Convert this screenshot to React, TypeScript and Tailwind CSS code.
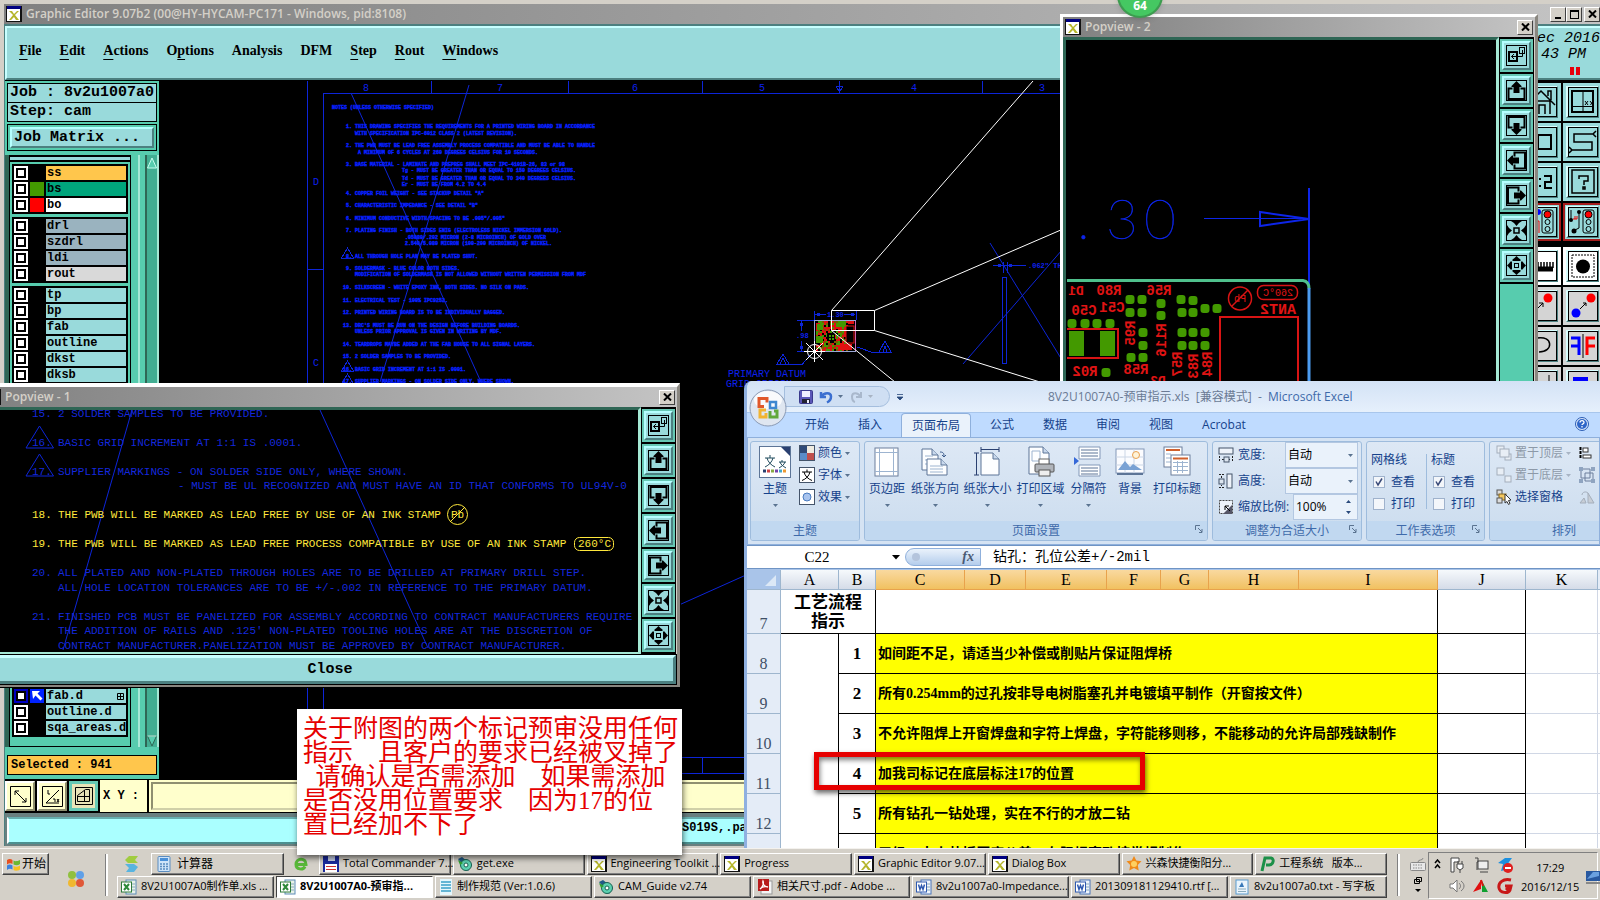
import React from "react";

const mono = "[font-family:'Liberation_Mono',monospace]";
const serif = "[font-family:'Liberation_Serif','Noto_Sans_CJK_SC',serif]";
const ui = "[font-family:'Open_Sans','Noto_Sans_CJK_SC',sans-serif]";

/* ---------- shared window parts ---------- */

function XLogo() {
  return (
    <svg width="16" height="16" viewBox="0 0 16 16" className="block shrink-0" aria-hidden="true">
      <rect x="0" y="0" width="16" height="16" fill="#111" />
      <rect x="1" y="0" width="14" height="3" fill="#000080" />
      <rect x="1" y="3" width="13" height="12" fill="#fff" />
      <path d="M3 5h3l2 3 3-3h2l-4 4 4 5h-3l-2-3-3 3H3l4-5z" fill="#b5b52a" />
    </svg>
  );
}

const winButton =
  "flex h-[15px] w-4 shrink-0 items-center justify-center border border-t-white border-l-white border-r-[#404040] border-b-[#404040] bg-[#d4d0c8] text-black";

function CloseButton() {
  return (
    <button className={winButton} aria-label="Close window">
      <svg width="9" height="8" viewBox="0 0 9 8">
        <path d="M1 .5l7 7M8 .5l-7 7" stroke="#000" strokeWidth="2" />
      </svg>
    </button>
  );
}

function TitleBar({ title, children }: { title: string; children: React.ReactNode }) {
  return (
    <div className="flex h-5 shrink-0 items-center gap-1 bg-gradient-to-r from-[#808080] to-[#c4c4c4] px-0.5">
      <XLogo />
      <span className={`${ui} flex-1 whitespace-nowrap text-[12px] leading-5 font-semibold text-[#d4d0c8]`}>{title}</span>
      {children}
    </div>
  );
}

/* ---------- popview tool column ---------- */

const tray = (
  <>
    <path d="M6.500 8.500H2.500V19H18.500V8.500H14.500" fill="none" stroke="#000" strokeWidth="2" />
    <path d="M10.500 1l3 3 2 2v1h-2v6h-6V7h-2V6l2-2z" fill="#000" />
  </>
);

const popIcons: { label: string; art: React.ReactNode }[] = [
  {
    label: "Detach",
    art: (
      <g fill="none" stroke="#000">
        <rect x="3" y="7" width="8" height="9" strokeWidth="2" />
        <rect x="13.500" y="2.500" width="5" height="6" />
        <path d="M16.500 5v6.500H5.500M8 9l-2.500 2.500L8 14" />
      </g>
    ),
  },
  { label: "Pan up", art: tray },
  { label: "Pan down", art: <g transform="rotate(180 10.5 10.5)">{tray}</g> },
  { label: "Pan left", art: <g transform="rotate(-90 10.5 10.5)">{tray}</g> },
  { label: "Pan right", art: <g transform="rotate(90 10.5 10.5)">{tray}</g> },
  {
    label: "Zoom in",
    art: (
      <g>
        <rect x="8" y="8" width="5" height="5" fill="none" stroke="#000" strokeWidth="1.500" />
        {[0, 90, 180, 270].map((a) => (
          <path key={a} d="M5 1h11l-3 2-2.500 3L8 3z" transform={`rotate(${a} 10.5 10.5)`} />
        ))}
      </g>
    ),
  },
  {
    label: "Zoom out",
    art: (
      <g>
        <rect x="8.500" y="8.500" width="4" height="4" fill="none" stroke="#000" />
        {[0, 90, 180, 270].map((a) => (
          <path key={a} d="M10.500 1l2 2 2 1.500V6h-8V4.500l2-1.500z" transform={`rotate(${a} 10.5 10.5)`} />
        ))}
      </g>
    ),
  },
];

function PopTools() {
  return (
    <div className="mr-px flex w-[35px] shrink-0 flex-col gap-0.5 bg-black px-px pt-0.5">
      {popIcons.map((i) => (
        <button
          key={i.label}
          aria-label={i.label}
          className="h-[33px] w-[33px] shrink-0 border-2 border-[#66c8b4] bg-[#99dadb]"
        >
          <span className="flex h-full w-full items-center justify-center border-2 border-t-[#b5ffff] border-r-[#4c8080] border-b-[#4c8080] border-l-[#b5ffff]">
            <svg width="21" height="21" viewBox="0 0 21 21">
              <rect x=".5" y=".5" width="20" height="20" fill="none" stroke="#000" />
              {i.art}
            </svg>
          </span>
        </button>
      ))}
      <div className="min-h-0 flex-1 bg-[#57ccae]" />
    </div>
  );
}

/* ---------- layer list ---------- */

type Layer = { name: string; bg: string; swatch?: string };
const layerGroups: Layer[][] = [
  [
    { name: "ss", bg: "bg-[#ffc64c]" },
    { name: "bs", bg: "bg-[#00a57c]", swatch: "bg-[#439900]" },
    { name: "bo", bg: "bg-white", swatch: "bg-[#ff0000]" },
  ],
  [
    { name: "drl", bg: "bg-[#9ab3bf]" },
    { name: "szdrl", bg: "bg-[#9ab3bf]" },
    { name: "ldi", bg: "bg-[#9ab3bf]" },
    { name: "rout", bg: "bg-[#d9d9d9]" },
  ],
  ["tp", "bp", "fab", "outline", "dkst", "dksb"].map((name) => ({ name, bg: "bg-[#99dadb]" })),
];

function LayerRow({ layer, selected }: { layer: Layer; selected?: boolean }) {
  return (
    <div className="flex h-[14px] items-stretch gap-0.5">
      <button
        aria-label={`Toggle ${layer.name}`}
        className={`flex w-[14px] shrink-0 items-center justify-center ${selected ? "bg-[#0000c0]" : "bg-white"}`}
      >
        <span className="h-[10px] w-[10px] border-2 border-black bg-white" />
      </button>
      <span className={`flex w-[14px] shrink-0 items-center justify-center ${selected ? "bg-[#0022ff]" : layer.swatch ?? "bg-black"}`}>
        {selected && (
          <svg width="12" height="12" viewBox="0 0 12 12">
            <path d="M1 1h8L6.500 3.500l5 5-2 2-5-5L2 9z" fill="#fff" />
          </svg>
        )}
      </span>
      <span className={`flex min-w-0 flex-1 items-center justify-between pl-px text-[12px] leading-[14px] font-bold ${layer.bg}`}>
        {layer.name}
        {selected && (
          <svg width="7" height="7" viewBox="0 0 7 7" className="mr-0.5">
            <path d="M.5 .5h6v6h-6zM3.500 .5v6M.5 3.500h6" fill="none" stroke="#000" />
          </svg>
        )}
      </span>
    </div>
  );
}

function LayerPanel() {
  return (
    <aside className={`${mono} flex w-[154px] shrink-0 flex-col bg-[#57ccae] text-black`}>
      <div className="mx-0.5 mt-0.5 flex flex-col border border-black bg-[#99dadb] text-[15px] leading-[18px] font-bold">
        <div className="border-b border-black pl-0.5 whitespace-nowrap">Job : 8v2u1007a0</div>
        <div className="pl-0.5">Step: cam</div>
      </div>
      <div className="mx-0.5 mt-0.5 border border-black p-0.5">
        <button className="block h-[21px] w-full border-2 border-t-[#b5ffff] border-r-[#4c8080] border-b-[#4c8080] border-l-[#b5ffff] bg-[#99dadb] px-0.5 text-left text-[15px] leading-[17px] font-bold">
          Job Matrix ...
        </button>
      </div>
      <div className="mt-1 flex min-h-0 flex-1 border-l-4 border-[#2f6655]">
        <div className="flex w-[122px] flex-col border-x border-t-2 border-b border-black">
          <div className="h-[3px] shrink-0 bg-[#99dadb]" />
          <div className="mb-0.5 h-0.5 shrink-0 bg-black" />
          {layerGroups.map((g) => (
            <div key={g[0].name} className="mx-0.5 mb-[3px] flex flex-col gap-0.5 bg-black p-0.5">
              {g.map((l) => (
                <LayerRow key={l.name} layer={l} />
              ))}
            </div>
          ))}
          <div className="min-h-0 flex-1" />
          <div className="mx-0.5 mb-[9px] flex flex-col gap-0.5 bg-black p-0.5">
            <LayerRow layer={{ name: "fab.d", bg: "bg-[#99dadb]" }} selected />
            <LayerRow layer={{ name: "outline.d", bg: "bg-[#99dadb]" }} />
            <LayerRow layer={{ name: "sqa_areas.d", bg: "bg-[#99dadb]" }} />
          </div>
        </div>
        <div className="ml-1 w-[5px] border-r-2 border-[#a5e8d5]" />
        <div className="ml-[5px] flex w-[14px] flex-col border-x-2 border-l-[#2f6655] border-r-[#a5e8d5] bg-[#42ad92]">
          <svg width="10" height="12" viewBox="0 0 10 12" className="mt-0.5">
            <path d="M5 1L9.500 11H.5z" fill="#57ccae" stroke="#c8fff0" />
          </svg>
          <span className="flex-1" />
          <svg width="10" height="12" viewBox="0 0 10 12">
            <path d="M5 11L.5 1h9z" fill="#57ccae" stroke="#2f6655" />
            <path d="M.5 1h9" stroke="#c8fff0" />
          </svg>
        </div>
      </div>
      <div className="mx-0.5 mt-2 mb-1 h-5 border border-black bg-[#ffc64c] px-[3px] text-[12px] leading-[18px] font-bold">
        Selected : 941
      </div>
    </aside>
  );
}

/* ---------- main board canvas ---------- */

const notes: [number, number, string, string][] = [
  [355, 128, "1.", "THIS DRAWING SPECIFIES THE REQUIREMENTS FOR A PRINTED WIRING BOARD IN ACCORDANCE"],
  [355, 135, "", "WITH SPECIFICATION IPC-6012 CLASS 2 (LATEST REVISION)."],
  [355, 147, "2.", "THE PWB MUST BE LEAD FREE ASSEMBLY PROCESS COMPATIBLE AND MUST BE ABLE TO HANDLE"],
  [358, 154, "", "A MINIMUM OF 6 CYCLES AT 260 DEGREES CELSIUS FOR 10 SECONDS."],
  [355, 166, "3.", "BASE MATERIAL - LAMINATE AND PREPREG SHALL MEET IPC-4101B-26, 83 or 98"],
  [402, 172, "", "Tg - MUST BE GREATER THAN OR EQUAL TO 150 DEGREES CELSIUS."],
  [402, 180, "", "Td - MUST BE GREATER THAN OR EQUAL TO 340 DEGREES CELSIUS."],
  [402, 186, "", "Er - MUST BE FROM 4.2 TO 4.4"],
  [355, 195, "4.", 'COPPER FOIL WEIGHT - SEE STACKUP DETAIL "A"'],
  [355, 207, "5.", 'CHARACTERISTIC IMPEDANCE - SEE DETAIL "B"'],
  [355, 220, "6.", 'MINIMUM CONDUCTIVE WIDTH/SPACING TO BE .005"/.005"'],
  [355, 232, "7.", "PLATING FINISH - BOTH SIDES ENIG (ELECTROLESS NICKEL IMMERSION GOLD)."],
  [405, 239, "", ".05080/.202 MICRON (2-8 MICROINCH) OF GOLD OVER"],
  [405, 245, "", "2.540/5.080 MICRON (100-200 MICROINCH) OF NICKEL."],
  [355, 258, "8.", "ALL THROUGH HOLE PLAN MAY BE PLATED SHUT."],
  [355, 270, "9.", "SOLDERMASK - BLUE COLOR BOTH SIDES."],
  [355, 276, "", "MODIFICATION OF SOLDERMASK IS NOT ALLOWED WITHOUT WRITTEN PERMISSION FROM MDF"],
  [355, 289, "10.", "SILKSCREEN - WHITE EPOXY INK, BOTH SIDES.  NO SILK ON PADS."],
  [355, 302, "11.", "ELECTRICAL TEST - 100% IPC9252."],
  [355, 314, "12.", "PRINTED WIRING BOARD IS TO BE INDIVIDUALLY BAGGED."],
  [355, 327, "13.", "DRC'S MUST BE RUN ON THE DESIGN BEFORE BUILDING BOARDS."],
  [355, 333, "", "UNLESS PRIOR APPROVAL IS GIVEN IN WRITING BY MDF."],
  [355, 346, "14.", "TEARDROPS MAYBE ADDED AT THE FAB HOUSE TO ALL SIGNAL LAYERS."],
  [355, 358, "15.", "2 SOLDER SAMPLES TO BE PROVIDED."],
  [355, 371, "16.", "BASIC GRID INCREMENT AT 1:1 IS .0001."],
  [355, 383, "17.", "SUPPLIER MARKINGS - ON SOLDER SIDE ONLY, WHERE SHOWN."],
];

const speckles = (() => {
  const out: { x: number; y: number; c: string }[] = [];
  let s = 7;
  const palette = ["#e01010", "#e01010", "#439900", "#439900", "#000", "#7a5a00"];
  for (let y = 321; y < 351; y += 2)
    for (let x = 816; x < 848; x += 2) {
      s = (s * 1103515245 + 12345) % 2147483648;
      out.push({ x, y, c: palette[Math.floor(s / 65536) % palette.length] });
    }
  return out;
})();

function BoardCanvas() {
  return (
    <svg width="1441" height="697" viewBox="159 81 1441 697" className="block shrink-0">
      <rect x="159" y="81" width="1441" height="697" fill="#000" />
      <g stroke="#0d25d8" fill="none" shapeRendering="crispEdges">
        <path d="M307.500 81V778M323.500 778V93.500H1062M431.500 81V93M568.500 81V93M702.500 81V93M839.500 81V93M982.500 81V93M307 269.500H323M660 757.500H760M660 773.500H760M702.500 757V773" />
        <path d="M836 86l3.500 6 3.500-6zM341.500 258l6-10 6 10zM341.500 371l6-10 6 10zM341.500 384l6-10 6 10z" />
        <path d="M814.500 311V320M856.500 311V320M815 314.500H826M844 314.500H855M797 320.500H814M797 351.500H810M801.500 321V331M801.500 341V351" />
        <path d="M776 364.500h26l8-9M777 364l6-10 6 10zM780 364l3-6 3 6M857 347l14 5h19M879 352l6-11 6 11zM883 352l2-6 2 6" />
        <path d="M993 265.500H1010M1008 265.500H1026M1003.500 262V273M1007.500 262V273M1002.500 277.500H1006.500V363.500H1002.500z" />
      </g>
      <g fill="#0d25d8">
        <path d="M800 323h3v3h-3zM800 346h3v3h-3zM817 313h3v3h-3zM851 313h3v3h-3zM998 264h3v3h-3zM1009 264h3v3h-3z" />
      </g>
      <g stroke="#0d25d8" fill="none">
        <path d="M351 93L481 382M469 85L380 382M990 243L1062 360M963 364L1062 250M679 605L746 575" />
      </g>
      <g fill="#0d20f0" className={mono}>
        <g fontSize="10" textAnchor="middle">
          <text x="366" y="91">8</text>
          <text x="500" y="91">7</text>
          <text x="635" y="91">6</text>
          <text x="762" y="91">5</text>
          <text x="914" y="91">4</text>
          <text x="1042" y="91">3</text>
          <text x="316" y="185">D</text>
          <text x="316" y="366">C</text>
        </g>
        <g fontSize="5" fontWeight="700" fill="#0820ff" stroke="#0820ff" strokeWidth=".4" className="whitespace-pre">
          <text x="332" y="109">NOTES (UNLESS OTHERWISE SPECIFIED)</text>
          {notes.map(([x, y, n, t]) => (
            <React.Fragment key={y}>
              {n && (
                <text x="352" y={y} textAnchor="end">
                  {n}
                </text>
              )}
              <text x={x} y={y}>
                {t}
              </text>
            </React.Fragment>
          ))}
        </g>
        <text x="728" y="377" fontSize="10">PRIMARY DATUM</text>
        <text x="726" y="387" fontSize="10">GRID ORIGIN</text>
        <text x="827" y="317" fontSize="7" fontWeight="700">1.30</text>
        <text x="796" y="338" fontSize="7" fontWeight="700">.98</text>
        <text x="1028" y="268" fontSize="7" fontWeight="700">.062" THK</text>
      </g>
      {speckles.map((p) => (
        <rect key={`${p.x}-${p.y}`} x={p.x} y={p.y} width="2" height="2" fill={p.c} />
      ))}
      <g fill="#439900">
        <rect x="817" y="324" width="6" height="6" />
        <rect x="838" y="321" width="8" height="6" />
        <rect x="816" y="336" width="7" height="7" />
        <rect x="827" y="333" width="8" height="8" fill="#000" />
        <rect x="829" y="335" width="2" height="2" />
        <rect x="832" y="335" width="2" height="2" />
        <rect x="829" y="338" width="2" height="2" />
        <rect x="832" y="338" width="2" height="2" />
        <rect x="848" y="321" width="6" height="3" fill="#e01010" />
        <rect x="840" y="344" width="12" height="6" fill="#e01010" />
        <rect x="846" y="326" width="8" height="17" fill="#000" stroke="#e01010" />
      </g>
      <rect x="814.500" y="320.500" width="41" height="31" fill="none" stroke="#9aa8d8" />
      <path d="M855.500 321V351" stroke="#d060b0" />
      <g stroke="#fff" fill="none">
        <path d="M831.500 310.500H874.500V330.500H831.500zM831.500 310.500L1033 81M874.500 310.500L1062 229.500M874.500 330.500L1040 382M831.500 330.500L895 382" />
        <circle cx="814.500" cy="351.500" r="7" />
        <path d="M814.500 341V362M804 351.500H825M806 343L823 360M806 360L823 343" />
      </g>
    </svg>
  );
}

/* ---------- main window toolbar ---------- */

const thin = { fill: "none", stroke: "#000" } as const;
function Lamp() {
  return (
    <g stroke="#000">
      <rect x="15" y="3" width="11" height="23" rx="2" fill="none" />
      <circle cx="20.500" cy="7.500" r="3.500" fill="#f00" />
      <circle cx="20.500" cy="15" r="2.500" fill="none" />
      <circle cx="20.500" cy="22" r="2.500" fill="none" />
    </g>
  );
}
const toolButtons: { label: string; bg: string; frame: string; art: React.ReactNode }[] = [
  { label: "Home view", bg: "bg-[#99dadb]", frame: "border-[#99dadb]", art: <path d="M7 27V14H23V27M1 17L14 4 28 18M12 27V18h6v9M21 9V4h3v9" {...thin} strokeWidth="1.500" /> },
  { label: "Window XY", bg: "bg-[#99dadb]", frame: "border-[#99dadb]", art: <g {...thin}><rect x="4" y="4" width="21" height="21" strokeWidth="2" /><path d="M15 4V25M4 19.500H25M17 14l3 4M20 14l-3 4M22 14l1.500 2M25 14l-2.500 4" /></g> },
  { label: "Area", bg: "bg-[#99dadb]", frame: "border-[#99dadb]", art: <rect x="11" y="8" width="13" height="14" {...thin} strokeWidth="2" /> },
  { label: "Serpentine", bg: "bg-[#99dadb]", frame: "border-[#99dadb]", art: <path d="M26 7H6v8H24v8H3M28 4l-3 3 3 3M1 20l3 3-3 3" {...thin} strokeWidth="1.500" /> },
  { label: "Scale 1:2", bg: "bg-[#99dadb]", frame: "border-[#99dadb]", art: <g><path d="M12 11h2v2h-2zM12 18h2v2h-2z" /><path d="M17 9h7v6h-6v6h7" {...thin} strokeWidth="2" /></g> },
  { label: "Help", bg: "bg-[#99dadb]", frame: "border-[#99dadb]", art: <g><rect x="4" y="3" width="22" height="23" {...thin} strokeWidth="1.500" /><path d="M11 12V9h9v5h-4v4M15 20h2v2h-2z" {...thin} strokeWidth="1.500" /></g> },
  { label: "Traffic left", bg: "bg-[#99dadb]", frame: "border-[#a51c1c]", art: <g><Lamp /><circle cx="11" cy="5" r="3" fill="#00f" /><path d="M4 14h8v12" fill="none" stroke="#e00" /></g> },
  { label: "Traffic right", bg: "bg-[#99dadb]", frame: "border-[#a51c1c]", art: <g><Lamp /><path d="M3 3v10M11 5v16l-6 3" {...thin} /><circle cx="3" cy="13" r="2" /><circle cx="11" cy="5" r="2" /><circle cx="6" cy="24" r="2.500" /><path d="M5 12h4v-3M7 12V9" stroke="#e00" fill="none" /></g> },
  { label: "Ruler", bg: "bg-white", frame: "border-white", art: <g><path d="M0 18h26" stroke="#000" strokeWidth="5" /><path d="M2 11v6M5 11v6M8 11v6M11 11v6M14 11v6M17 11v6M20 11v6M23 11v6M26 11v6" stroke="#000" strokeWidth="1.500" /></g> },
  { label: "Pad", bg: "bg-white", frame: "border-white", art: <g><rect x="4" y="4" width="22" height="22" {...thin} strokeDasharray="2 1" /><circle cx="15" cy="15.500" r="7" /></g> },
  { label: "Move point", bg: "bg-[#d4d4d4]", frame: "border-[#d4d4d4]", art: <g><circle cx="21" cy="7" r="4.500" fill="#f00" /><path d="M8 20l8-8M16 16v-4h-4" {...thin} /></g> },
  { label: "Copy point", bg: "bg-[#d4d4d4]", frame: "border-[#d4d4d4]", art: <g><circle cx="23" cy="7" r="4.500" fill="#f00" /><circle cx="8" cy="22" r="4.500" fill="#00f" /><path d="M12 18l6-6M18 15v-3h-3" {...thin} /></g> },
  { label: "Rotate", bg: "bg-[#d4d4d4]", frame: "border-[#d4d4d4]", art: <path d="M10 7c16-3 17 14 2 14" {...thin} strokeWidth="1.500" /> },
  { label: "Mirror", bg: "bg-[#d4d4d4]", frame: "border-[#d4d4d4]", art: <g fill="none" strokeWidth="3"><path d="M3 7h8v17M3 15h8" stroke="#00f" /><path d="M15 3v24" stroke="#000" strokeWidth="1" /><path d="M27 7h-8v17M27 15h-8" stroke="#f00" /></g> },
  { label: "Stretch", bg: "bg-[#d4d4d4]", frame: "border-[#d4d4d4]", art: <path d="M22 4v20" {...thin} /> },
  { label: "Attributes", bg: "bg-[#d4d4d4]", frame: "border-[#d4d4d4]", art: <path d="M5 6h15v12h-4v-6h-7v6H5z" fill="#00f" /> },
];

function ToolGrid() {
  return (
    <div className="-mr-0.5 grid w-[80px] shrink-0 grid-cols-2 content-start gap-0.5 bg-black pt-0.5">
      {toolButtons.map((b, i) => (
        <button key={b.label} aria-label={b.label} className={`h-[38px] border-2 p-px ${b.bg} ${b.frame} ${i === 8 || i === 9 ? "mt-1" : ""}`}>
          <span className="flex h-full w-full items-center justify-center border-2 border-t-[#d8ffff] border-r-[#4c8080] border-b-[#4c8080] border-l-[#d8ffff]">
            <svg width="30" height="30" viewBox="0 0 30 30" className="shrink-0">
              <rect x=".5" y=".5" width="29" height="29" {...thin} />
              {b.art}
            </svg>
          </span>
        </button>
      ))}
    </div>
  );
}

/* ---------- main window ---------- */

const menus: [string, string, string][] = [
  ["", "F", "ile"],
  ["", "E", "dit"],
  ["", "A", "ctions"],
  ["O", "p", "tions"],
  ["Analysis", "", ""],
  ["DFM", "", ""],
  ["", "S", "tep"],
  ["", "R", "out"],
  ["", "W", "indows"],
];

const creamButton =
  "flex h-[30px] w-[30px] shrink-0 items-center justify-center border-2 border-t-white border-l-white border-r-[#8f8f70] border-b-[#8f8f70] bg-[#ffffcc]";

function GraphicEditor() {
  return (
    <section className="absolute inset-0 flex flex-col overflow-hidden border-t-4 border-b-2 border-l-4 border-[#d4d0c8]">
      <TitleBar title="Graphic Editor 9.07b2 (00@HY-HYCAM-PC171 - Windows, pid:8108)">
        <div className="-mr-0.5 flex items-center">
          <button className={winButton} aria-label="Minimize">
            <span className="mt-2 h-0.5 w-[6px] bg-black" />
          </button>
          <button className={winButton} aria-label="Maximize">
            <span className="h-[9px] w-[9px] border border-t-2 border-black" />
          </button>
          <span className="w-0.5" />
          <CloseButton />
        </div>
      </TitleBar>
      <div className="flex min-h-0 flex-1 flex-col border-t-2 border-l border-[#4c8080]">
        <header className="flex h-[54px] shrink-0 items-center border-2 border-t-[#c8ffff] border-r-0 border-b-[#4c8080] border-l-[#c8ffff] bg-[#99dadb]">
          <nav className={`${serif} flex flex-1 gap-[18px] pb-1 pl-3 text-[14px] leading-5 font-bold text-black`}>
            {menus.map(([a, u, b]) => (
              <button key={a + u + b}>
                {a}
                {u && <span className="underline underline-offset-4">{u}</span>}
                {b}
              </button>
            ))}
          </nav>
          <div className={`${mono} flex w-[63px] flex-col items-start text-[15px] leading-4 italic`}>
            <span>ec 2016</span>
            <span className="pl-1">43 PM</span>
            <span className="mt-1 flex gap-0.5 pl-[33px]">
              <span className="h-2 w-1 bg-red-600" />
              <span className="h-2 w-1 bg-red-600" />
            </span>
          </div>
        </header>
        <div className="flex min-h-0 flex-1 border-t border-black">
          <LayerPanel />
          <div className="min-w-0 flex-1 overflow-hidden bg-black">
            <BoardCanvas />
          </div>
          <ToolGrid />
        </div>
        <div className="flex h-[34px] shrink-0 items-center gap-0.5 bg-black">
          <button className={creamButton} aria-label="Measure">
            <svg width="21" height="21" viewBox="0 0 21 21">
              <path d="M.5 .5h20v20H.5zM5 5l11 11M5 9V5h4M16 12v4h-4" {...thin} />
            </svg>
          </button>
          <button className={creamButton} aria-label="Angle snap">
            <svg width="21" height="21" viewBox="0 0 21 21">
              <path d="M.5 .5h20v20H.5zM4 17L17 4M4 17H17M6 4v4h2M11 13h2v3M15 13l2 3M17 13l-2 3" {...thin} />
            </svg>
          </button>
          <button className="flex h-[30px] w-[29px] shrink-0 items-center justify-center border-[3px] border-[#66c8b4] bg-[#e8e4b8]" aria-label="Grid">
            <svg width="18" height="18" viewBox="0 0 18 18">
              <path d="M.5 .5h17v17H.5zM10.500 2.500h4v12h-12v-6zM9.500 3v12M3 9.500h12" {...thin} />
            </svg>
          </button>
          <label htmlFor="xy" className={`${mono} flex h-[32px] w-[47px] shrink-0 items-center bg-[#ffffcc] pl-[3px] text-[12px] font-bold whitespace-pre`}>
            X Y :
          </label>
          <div className="h-[32px] flex-1 bg-[#ffffcc] p-0.5">
            <input id="xy" className="h-full w-full border-2 border-[#8f8f70] border-r-[#d0d0a8] border-b-[#d0d0a8] bg-[#ffffcc]" />
          </div>
        </div>
        <div className="h-[33px] shrink-0 bg-[#6a8080] pt-1 pl-0.5">
          <div className={`${mono} h-[27px] border-2 border-t-[#66b0b0] border-r-0 border-b-[#4c9090] border-l-white bg-[#aaffff] pl-[673px] text-[12px] leading-[19px] font-bold`}>
            S019S,.pa
          </div>
        </div>
      </div>
    </section>
  );
}

/* ---------- popview windows ---------- */

const popLines: [number, number, string, string, boolean?][] = [
  [58, 417, "15.", "2 SOLDER SAMPLES TO BE PROVIDED."],
  [58, 446, "16.", "BASIC GRID INCREMENT AT 1:1 IS .0001."],
  [58, 475, "17.", "SUPPLIER MARKINGS - ON SOLDER SIDE ONLY, WHERE SHOWN."],
  [178, 489, "", "- MUST BE UL RECOGNIZED AND MUST HAVE AN ID THAT CONFORMS TO UL94V-0"],
  [58, 518, "18.", "THE PWB WILL BE MARKED AS LEAD FREE BY USE OF AN INK STAMP", true],
  [58, 547, "19.", "THE PWB WILL BE MARKED AS LEAD FREE PROCESS COMPATIBLE BY USE OF AN INK STAMP", true],
  [58, 576, "20.", "ALL PLATED AND NON-PLATED THROUGH HOLES ARE TO BE DRILLED AT PRIMARY DRILL STEP."],
  [58, 591, "", "ALL HOLE LOCATION TOLERANCES ARE TO BE +/-.002 IN REFERENCE TO THE PRIMARY DATUM."],
  [58, 620, "21.", "FINISHED PCB MUST BE PANELIZED FOR ASSEMBLY ACCORDING TO CONTRACT MANUFACTURERS REQUIRE"],
  [58, 634, "", "THE ADDITION OF RAILS AND .125' NON-PLATED TOOLING HOLES ARE AT THE DISCRETION OF"],
  [58, 649, "", "CONTRACT MANUFACTURER.PANELIZATION MUST BE APPROVED BY CONTRACT MANUFACTURER."],
];

function PopviewOne() {
  return (
    <section className="absolute top-[383px] -left-[20px] flex h-[304px] w-[700px] flex-col border-[3px] border-t-4 border-t-white border-r-[#8a8780] border-b-[#8a8780] border-l-white bg-[#d4d0c8] shadow-[1px_1px_0_#000]">
      <TitleBar title="Popview - 1">
        <CloseButton />
      </TitleBar>
      <div className="flex min-h-0 flex-1">
        <div className="min-w-0 flex-1 overflow-hidden border-t-[3px] border-r-[3px] border-b-[3px] border-t-[#2f6655] border-r-[#a5e8d5] border-b-[#a5e8d5] bg-black">
          <svg width="653" height="241" viewBox="-17 410 653 241" className="block">
            <g stroke="#0d25d8" fill="none">
              <path d="M132 410L63 650M320 410L428 648M26 448l13.500-22 14 22zM26 476l13.500-22 14 22z" />
            </g>
            <g fontSize="11" className={mono}>
              {popLines.map(([x, y, n, t, hot]) => (
                <g key={y} fill={hot ? "#ffe83c" : "#1428dc"}>
                  {n && <text x="32" y={y}>{n}</text>}
                  <text x={x} y={y}>{t}</text>
                </g>
              ))}
              <g fill="#ffe83c">
                <text x="451" y="518">Pb</text>
                <text x="578" y="547">260°C</text>
              </g>
            </g>
            <g stroke="#ffe83c" fill="none">
              <circle cx="457.500" cy="514.500" r="10" />
              <path d="M450 522l15-15" />
              <rect x="574.500" y="537.500" width="39" height="13" rx="5" />
            </g>
          </svg>
        </div>
        <PopTools />
      </div>
      <button
        className={`${mono} mx-px h-[29px] shrink-0 border-[3px] border-t-[#c8ffff] border-r-[#4c8080] border-b-[#4c8080] border-l-[#c8ffff] bg-[#99dadb] text-[15px] leading-[22px] font-bold text-black outline-1 outline-black`}
      >
        Close
      </button>
    </section>
  );
}

const pads: [number, number][] = [
  [1072, 323], [1085, 323], [1097, 323], [1110, 323], [1130, 299], [1142, 299], [1130, 312], [1142, 312],
  [1161, 303], [1161, 315], [1181, 299], [1193, 300], [1182, 312], [1193, 312], [1205, 308], [1217, 308],
  [1143, 332], [1143, 345], [1182, 332], [1193, 332], [1205, 332], [1182, 345], [1193, 345], [1205, 345],
  [1131, 357], [1143, 357], [1106, 372],
];

const marks: [number, number, string, number, string][] = [
  [1076, 295, "D1", 13, ""], [1109, 295, "R80", 14, ""], [1159, 295, "R56", 14, ""], [1084, 315, "C50", 14, ""],
  [1112, 312, "C51", 14, ""], [1136, 374, "R58", 14, ""], [1085, 376, "R02", 14, ""], [1278, 314, "ANT2", 15, ""],
  [1125, 333, "R95", 14, "v"], [1156, 340, "R116", 14, "v"], [1172, 364, "R57", 14, "v"], [1188, 366, "R83", 14, "v"],
  [1202, 364, "R84", 14, "v"], [1158, 385, "D3", 13, ""],
];

function PopviewTwo() {
  return (
    <section className="absolute top-3.5 left-[1060px] flex h-[420px] w-[478px] flex-col border-[3px] border-t-white border-r-[#8a8780] border-b-[#8a8780] border-l-white bg-[#d4d0c8]">
      <TitleBar title="Popview - 2">
        <CloseButton />
      </TitleBar>
      <div className="flex min-h-0 flex-1 border-l-[3px] border-[#2f6655]">
        <div className="min-w-0 flex-1 overflow-hidden border-t-[3px] border-r-[3px] border-t-[#2f6655] border-r-[#a5e8d5] bg-black">
          <svg width="430" height="377" viewBox="1066 40 430 377" className="block">
            <g stroke="#0d25e8" fill="none">
              <path d="M1204 218.500H1309" />
              <path d="M1260 212V226L1309 219zM1309 188V286" strokeWidth="2" />
            </g>
            <g fill="#0d25e8" className="[font-family:'Lato',sans-serif]" fontSize="55" fontWeight="100" stroke="#0d25e8" strokeWidth=".5">
              <text x="1077" y="239">.</text>
              <text x="1106" y="239">3</text>
              <text x="1144" y="239">0</text>
            </g>
            <path d="M1067 280.500H1303q6 1 6 8" fill="none" stroke="#4fc08c" strokeWidth="3" />
            <path d="M1309 288V400" stroke="#4c9cf0" strokeWidth="3" />
            <g fill="none" stroke="#d81414" strokeWidth="1.500">
              <circle cx="1240" cy="298.500" r="11.500" />
              <path d="M1232 306l16-16" />
              <rect x="1257.500" y="285.500" width="40" height="14" rx="6" />
              <path d="M1220 400V317H1298V400" strokeWidth="2" />
              <path d="M1067 329H1118V358H1067" strokeWidth="2" />
            </g>
            <g fill="#439900">
              <rect x="1069" y="331" width="15" height="25" />
              <rect x="1100" y="331" width="15" height="25" />
              {pads.map(([x, y]) => (
                <rect key={`${x}-${y}`} x={x - 4.5} y={y - 4} width="9" height="9" rx="3" />
              ))}
            </g>
            <g fill="#e01414" fontWeight="700" textAnchor="middle" className={mono}>
              {marks.map(([x, y, t, size, dir]) => (
                <text
                  key={t}
                  fontSize={size}
                  transform={dir === "v" ? `translate(${x} ${y}) rotate(90) scale(1 -1) translate(0 10)` : `translate(${x} ${y}) scale(-1 1)`}
                >
                  {t}
                </text>
              ))}
              <text fontSize="10" fontWeight="400" transform="translate(1278 296) scale(-1 1)">260°C</text>
              <text fontSize="10" fontWeight="400" transform="translate(1240 302) scale(-1 1)">Pb</text>
            </g>
          </svg>
        </div>
        <PopTools />
      </div>
    </section>
  );
}

/* ---------- Excel ---------- */

function Caret({ dim }: { dim?: boolean }) {
  return (
    <svg width="5" height="3" viewBox="0 0 5 3" className="shrink-0">
      <path d="M0 0h5L2.500 3z" fill={dim ? "#a8b4c4" : "#5a7390"} />
    </svg>
  );
}

function PageShape({ x = 4, y = 2, w = 18, h = 24 }: { x?: number; y?: number; w?: number; h?: number }) {
  return (
    <g>
      <path d={`M${x} ${y}h${w - 6}l6 6v${h - 6}h-${w}z`} fill="#fdfeff" stroke="#5d7597" />
      <path d={`M${x + w - 6} ${y}v6h6`} fill="#c8d8ec" stroke="#5d7597" />
    </g>
  );
}

const bigButtons: { label: string; arrow: boolean; w: string; art: React.ReactNode }[] = [
  { label: "页边距", arrow: true, w: "w-[44px]", art: <g><rect x="4" y="2" width="23" height="28" fill="#fff" stroke="#6c7f9c" /><path d="M8.500 2v28M22.500 2v28M4 6.500h23M4 25.500h23" stroke="#9db4d0" /></g> },
  { label: "纸张方向", arrow: true, w: "w-[52px]", art: <g><PageShape x={3} y={3} w={16} h={21} /><path d="M6 10h8M6 14h8M6 18h5" stroke="#9db4d0" /><PageShape x={8} y={13} w={20} h={16} /><path d="M11 20h13M11 23h13M11 26h13" stroke="#9db4d0" /><path d="M21 6c4 0 4 2 4 5M23 9l2 2 2-2" fill="none" stroke="#3d5c8c" /></g> },
  { label: "纸张大小", arrow: true, w: "w-[53px]", art: <g><PageShape x={9} y={7} w={18} h={22} /><path d="M9 3.500h18M9 1v5M27 1v5M4.500 7v22M2 7h5M2 29h5" stroke="#2a4070" fill="none" /></g> },
  { label: "打印区域", arrow: true, w: "w-[53px]", art: <g><PageShape x={4} y={1} w={20} h={27} /><path d="M7 5h8v10H7z" fill="none" stroke="#9db4d0" /><rect x="14" y="13" width="10" height="6" fill="#fff" stroke="#666" /><rect x="10" y="18" width="19" height="8" rx="1" fill="#b0b4ba" stroke="#555" /><rect x="14" y="24" width="11" height="6" fill="#eee" stroke="#555" /></g> },
  { label: "分隔符", arrow: true, w: "w-[43px]", art: <g><path d="M6 1h21v12H6zM6 19h21v11H6z" fill="#fdfeff" stroke="#8398b8" /><path d="M8 4h17M8 7h17M8 10h17M8 22h17M8 25h17M8 28h17" stroke="#5d7597" /><path d="M1 11l5 4-5 4z" fill="#3568d8" /></g> },
  { label: "背景", arrow: false, w: "w-[40px]", art: <g><rect x="2" y="3" width="28" height="24" fill="#fbfcff" stroke="#8398b8" /><path d="M11 3v24M20 3v24M2 11h28M2 19h28" stroke="#cbd6e6" /><circle cx="22" cy="9" r="3.500" fill="#fff3d8" stroke="#e8a050" /><path d="M4 24l7-9 5 6 3-3 9 6z" fill="#7aa2d4" /><path d="M3 28h26" stroke="#5d7597" strokeWidth="2" /></g> },
  { label: "打印标题", arrow: false, w: "w-[54px]", art: <g><rect x="3" y="1" width="18" height="20" fill="#fff" stroke="#6c7f9c" /><path d="M5 4h14" stroke="#d0602c" strokeWidth="2" /><path d="M5 8h5M5 12h5M5 16h5" stroke="#9db4d0" /><rect x="10" y="9" width="19" height="20" fill="#fff" stroke="#6c7f9c" /><path d="M12 12.500h15" stroke="#d0602c" strokeWidth="2" /><path d="M12 16.500h15M12 20.500h15M12 24.500h15M16.500 15v12M21.500 15v12" stroke="#9db4d0" /></g> },
];

function Group({ title, width, launcher, children }: { title: string; width: string; launcher?: boolean; children: React.ReactNode }) {
  return (
    <section className={`flex shrink-0 flex-col overflow-hidden rounded-[3px] border border-[#9ebcdd] bg-gradient-to-b from-[#dde8f5] to-[#cbdcee] ${width}`}>
      <div className="flex h-[79px] shrink-0">{children}</div>
      <div className="relative flex-1 bg-[#c1d8f0] text-center leading-[19px] text-[#3e6aaa]">
        {title}
        {launcher && (
          <button aria-label={`${title} options`} className="absolute top-1 right-1">
            <svg width="8" height="8" viewBox="0 0 8 8" className="block">
              <path d="M.5 5V.5H5M3 3l4 4M7 4v3.500H4" {...thin} stroke="#5a7390" />
            </svg>
          </button>
        )}
      </div>
    </section>
  );
}

function Check({ label, on }: { label: string; on?: boolean }) {
  return (
    <label className="flex items-center gap-1.5 leading-[22px]">
      <span className="relative block h-3 w-3">
        <input type="checkbox" defaultChecked={on} className="block h-3 w-3 appearance-none border border-[#9fb2cc] bg-[#f3f6fa]" />
        {on && (
          <svg width="12" height="12" viewBox="0 0 12 12" className="pointer-events-none absolute inset-0">
            <path d="M3 5.500L5 9l4-6.500" fill="none" stroke="#3a4a78" strokeWidth="1.500" />
          </svg>
        )}
      </span>
      {label}
    </label>
  );
}

function Ribbon() {
  return (
    <div className="flex h-[108px] shrink-0 gap-1 overflow-hidden border border-[#8fb0dc] bg-[#d5e3f3] py-[3px] pl-0.5 text-[12px] text-[#15428b]">
      <Group title="主题" width="w-[110px]">
        <button className="flex w-12 flex-col items-center pt-1">
          <svg width="32" height="32" viewBox="0 0 32 32">
            <rect x=".5" y=".5" width="31" height="31" fill="#fff" stroke="#5d7597" strokeWidth="1" />
            <path d="M22 1h9v9z" fill="#2a4070" />
            <path d="M6 12h10M11 9v3M8 12c1 4 4 7 8 9M14 12c-1 4-4 7-8 9M20 16h7M23 14v2M21 16c1 3 3 4 6 6M26 16c-1 3-3 4-6 6" fill="none" stroke="#1f4a5c" />
            <path d="M4 25h3" stroke="#2a4070" strokeWidth="3" /><path d="M8 25h3" stroke="#c44" strokeWidth="3" /><path d="M12 25h3" stroke="#8a4" strokeWidth="3" /><path d="M16 25h3" stroke="#74a" strokeWidth="3" /><path d="M20 25h3" stroke="#4ac" strokeWidth="3" /><path d="M24 25h3" stroke="#e93" strokeWidth="3" />
          </svg>
          <span className="mb-1 leading-[22px]">主题</span>
          <Caret />
        </button>
        <div className="flex flex-col gap-[6px] pt-[3px] text-[12px] leading-4">
          <button className="flex items-center gap-[3px]">
            <svg width="16" height="16" viewBox="0 0 16 16"><rect width="16" height="16" fill="#44546a" /><rect x="1" y="1" width="7" height="7" fill="#2f4a78" /><rect x="8" y="1" width="7" height="7" fill="#f0ece0" /><rect x="1" y="8" width="7" height="7" fill="#5a8cc8" /><rect x="8" y="8" width="7" height="7" fill="#c0504d" /></svg>
            颜色 <Caret />
          </button>
          <button className="flex items-center gap-[3px]">
            <svg width="16" height="16" viewBox="0 0 16 16"><rect x=".5" y=".5" width="15" height="15" fill="#fff" stroke="#44546a" /><path d="M3 5h10M8 2.500V5M5 5c1 4 4 7 8 8.500M11 5c-1 4-4 7-8 8.500" fill="none" stroke="#000" /></svg>
            字体 <Caret />
          </button>
          <button className="flex items-center gap-[3px]">
            <svg width="16" height="16" viewBox="0 0 16 16"><rect x=".5" y=".5" width="15" height="15" fill="#fff" stroke="#44546a" /><circle cx="8" cy="8" r="4" fill="#a9c4ee" stroke="#4a7cc0" /></svg>
            效果 <Caret />
          </button>
        </div>
      </Group>
      <Group title="页面设置" width="w-[344px]" launcher>
        {bigButtons.map((b) => (
          <button key={b.label} className={`flex shrink-0 flex-col items-center pt-1 ${b.w}`}>
            <svg width="32" height="32" viewBox="0 0 32 32">{b.art}</svg>
            <span className="mb-1 leading-[22px] whitespace-nowrap">{b.label}</span>
            {b.arrow && <Caret />}
          </button>
        ))}
      </Group>
      <Group title="调整为合适大小" width="w-[150px]" launcher>
        <div className="grid w-full grid-cols-[16px_43px_73px] content-start items-center gap-x-1 pl-[5px]">
          <svg width="16" height="16" viewBox="0 0 16 16"><rect x="1" y="1" width="14" height="6" fill="#eef3fa" stroke="#44546a" /><path d="M1.500 9v5M14.500 9v5M4 12.500h8" stroke="#222" strokeDasharray="2 1" /><rect x="6" y="10" width="5" height="5" fill="#dde6f0" stroke="#44546a" /></svg>
          <label htmlFor="fit-w">宽度:</label>
          <div className="flex h-[26px] w-[73px] items-center border border-[#b3c7e1] bg-[#eaf2fb] pr-1 pl-0.5">
            <select id="fit-w" className="w-full appearance-none bg-transparent text-black outline-none"><option>自动</option></select>
            <Caret />
          </div>
          <svg width="16" height="16" viewBox="0 0 16 16"><rect x="9" y="1" width="5" height="14" fill="#eef3fa" stroke="#44546a" /><path d="M1 1.500h6M1 14.500h6M3.500 3v10" stroke="#222" strokeDasharray="2 1" /><rect x="1" y="6" width="5" height="5" fill="#dde6f0" stroke="#44546a" /></svg>
          <label htmlFor="fit-h">高度:</label>
          <div className="flex h-[26px] w-[73px] items-center border border-[#b3c7e1] bg-[#eaf2fb] pr-1 pl-0.5">
            <select id="fit-h" className="w-full appearance-none bg-transparent text-black outline-none"><option>自动</option></select>
            <Caret />
          </div>
          <svg width="16" height="16" viewBox="0 0 16 16"><path d="M1.500 1.500h13v13h-13z" fill="#eef3fa" stroke="#444" strokeDasharray="2 1" /><path d="M14 6v9H5z" fill="#556" /><path d="M12 12L7 7M7 11V7h4" stroke="#000" fill="none" /></svg>
          <label htmlFor="fit-s" className="whitespace-nowrap">缩放比例:</label>
          <div className="flex h-[26px] w-[65px] items-center justify-self-end border border-[#b3c7e1] bg-[#eaf2fb] pr-1.5 pl-0.5">
            <input id="fit-s" defaultValue="100%" className="w-full min-w-0 bg-transparent text-black outline-none" />
            <svg width="5" height="14" viewBox="0 0 5 14" className="shrink-0"><path d="M0 3h5L2.500 0zM0 11h5l-2.500 3z" fill="#2a4a7c" /></svg>
          </div>
        </div>
      </Group>
      <Group title="工作表选项" width="w-[119px]" launcher>
        <div className="mt-[7px] ml-1 flex w-[55px] flex-col">
          <span className="leading-[22px]">网格线</span>
          <div className="pl-0.5"><Check label="查看" on /><Check label="打印" /></div>
        </div>
        <div className="mt-3 h-[55px] w-px bg-[#9ebcdd]" />
        <div className="mt-[7px] ml-1 flex w-[52px] flex-col">
          <span className="leading-[22px]">标题</span>
          <div className="pl-0.5"><Check label="查看" on /><Check label="打印" /></div>
        </div>
      </Group>
      <Group title="排列" width="w-[150px]">
        <div className="flex flex-col gap-[6px] pt-[3px] pl-1.5 leading-4">
          {["置于顶层", "置于底层"].map((t, i) => (
            <button key={t} className="flex items-center gap-[3px] text-[#8d99a8]">
              <svg width="16" height="16" viewBox="0 0 16 16" fill="#e8eef5" stroke="#a4aebb">
                <rect x="1" y="1" width="7" height="7" /><rect x="9" y="9" width="6" height="6" />{i === 0 && <rect x="4" y="4" width="9" height="8" />}
              </svg>
              {t} <Caret dim />
            </button>
          ))}
          <button className="flex items-center gap-[3px]">
            <svg width="16" height="16" viewBox="0 0 16 16"><rect x="1" y="1" width="5" height="5" fill="#ddd" stroke="#555" /><rect x="3" y="5" width="7" height="6" fill="#f5c860" stroke="#8a6a20" /><rect x="1" y="9" width="5" height="5" fill="#ddd" stroke="#555" /><path d="M9 5l6 6-2.500.5 1.500 3-1.500 1-1.500-3-2 1.500z" fill="#fff" stroke="#333" /></svg>
            选择窗格
          </button>
        </div>
        <div className="flex flex-col gap-[6px] pt-[3px] pl-2">
          <svg width="16" height="16" viewBox="0 0 16 16"><path d="M1.500 2v12" stroke="#000" strokeWidth="2" strokeDasharray="3 1" /><rect x="4" y="3" width="5" height="4" fill="#fff" stroke="#333" /><rect x="4" y="10" width="8" height="3" fill="#fff" stroke="#333" /></svg>
          <svg width="16" height="16" viewBox="0 0 16 16" fill="none" stroke="#6c7f9c"><path d="M2 2h9v9H2zM6 6h8v8H6z" /><path d="M0 0h4v4H0zM12 0h4v4h-4zM0 12h4v4H0zM12 12h4v4h-4z" fill="#8fa4c0" stroke="none" /></svg>
          <svg width="16" height="16" viewBox="0 0 16 16"><path d="M1 14h6L5 9zM9 4v10h6z" fill="#c8ced6" stroke="#a4aebb" /><path d="M3 6c0-3 4-4 6-2" fill="none" stroke="#a4aebb" /></svg>
        </div>
      </Group>
    </div>
  );
}

const columns: [string, string][] = [
  ["A", "w-[58px]"], ["B", "w-[37px]"], ["C", "w-[89px]"], ["D", "w-[61px]"], ["E", "w-[81px]"], ["F", "w-[54px]"],
  ["G", "w-[48px]"], ["H", "w-[90px]"], ["I", "w-[139px]"], ["J", "w-[88px]"], ["K", "w-[72px]"],
];

const rows: [string, string, string][] = [
  ["8", "1", "如间距不足，请适当少补偿或削贴片保证阻焊桥"],
  ["9", "2", "所有0.254mm的过孔按非导电树脂塞孔并电镀填平制作（开窗按文件）"],
  ["10", "3", "不允许阻焊上开窗焊盘和字符上焊盘，字符能移则移，不能移动的允许局部残缺制作"],
  ["11", "4", "加我司标记在底层标注17的位置"],
  ["12", "5", "所有钻孔一钻处理，实在不行的才放二钻"],
];

const rowHead = "border-r border-b border-[#9eb6ce] bg-[#e4ecf7] p-0 text-center align-bottom font-normal text-[#3f4f66] text-[16px] leading-[18px]";

function Sheet() {
  return (
    <table className={`${serif} w-[880px] table-fixed border-separate border-spacing-0 text-black`}>
      <colgroup>
        <col className="w-[34px]" />
        {columns.map(([n, w]) => (
          <col key={n} className={w} />
        ))}
        <col />
      </colgroup>
      <thead>
        <tr className="h-5 text-[16px] leading-[18px]">
          <th className="border-r border-b border-[#9eb6ce] bg-[#a9c4e9] p-0">
            <svg width="33" height="19" viewBox="0 0 33 19" className="block"><path d="M29 5v11H18z" fill="#dce8f6" /></svg>
          </th>
          {columns.map(([n], i) => (
            <th
              key={n}
              className={`border-r border-b p-0 font-normal ${
                i > 1 && i < 9 ? "border-[#e8a24c] bg-gradient-to-b from-[#f9d99f] to-[#f1c15f]" : "border-[#9eb6ce] bg-gradient-to-b from-[#f6f9fc] to-[#d5dce8]"
              }`}
            >
              {n}
            </th>
          ))}
          <th className="border-b border-[#9eb6ce] bg-[#e4ecf7]" />
        </tr>
      </thead>
      <tbody>
        <tr className="h-11">
          <th className={rowHead}>7</th>
          <td colSpan={2} className="border-r border-b border-black p-0 text-center text-[17px] leading-[19px] font-bold">
            工艺流程<br />指示
          </td>
          <td colSpan={7} className="border-r border-b border-black" />
          <td className="border-r border-b border-black" />
          <td className="border-r border-b border-[#d0d7e5]" />
          <td className="border-b border-[#d0d7e5]" />
        </tr>
        {rows.map(([r, n, t]) => (
          <tr key={r} className="h-10">
            <th className={rowHead}>{r}</th>
            <td className="border-r border-black" />
            <td className="border-r border-b border-black p-0 text-center text-[17px] font-bold">{n}</td>
            <td colSpan={7} className="border-r border-b border-black bg-[#ffff00] p-0 pl-0.5 text-[14px] leading-5 font-bold whitespace-nowrap">{t}</td>
            <td className="border-r border-b border-black" />
            <td className="border-r border-b border-[#d0d7e5]" />
            <td className="border-b border-[#d0d7e5]" />
          </tr>
        ))}
        <tr className="h-10">
          <th className={rowHead} />
          <td className="border-r border-black" />
          <td className="border-r border-b border-black" />
          <td colSpan={7} className="border-r border-b border-black bg-[#ffff00] p-0 pl-0.5 text-[14px] leading-5 font-bold whitespace-nowrap">
            三级、大小芯板厚度公差，有阻焊塞孔按常规制作
          </td>
          <td className="border-r border-b border-black" />
          <td className="border-r border-b border-[#d0d7e5]" />
          <td className="border-b border-[#d0d7e5]" />
        </tr>
      </tbody>
    </table>
  );
}

const tabs = ["开始", "插入", "页面布局", "公式", "数据", "审阅", "视图", "Acrobat"];

function Excel() {
  return (
    <section className={`${ui} absolute top-[381px] right-0 bottom-0 left-[744px] flex flex-col overflow-hidden rounded-tl-lg border-l-[3px] border-[#8fb0e0] bg-[#bfdbff] text-[12px]`}>
      <div className="flex h-[31px] shrink-0 items-center bg-gradient-to-b from-[#d3e2f5] to-[#e6f0fc] pl-[37px]">
        <div className="flex h-[21px] w-[106px] shrink-0 items-center gap-[6px] rounded-r-full border border-[#a4bede] bg-[#cfdff3] pl-[14px]">
          <button aria-label="Save">
            <svg width="14" height="14" viewBox="0 0 14 14"><rect x=".5" y=".5" width="13" height="13" rx="1" fill="#5b57b8" stroke="#3a3a8c" /><rect x="3" y="1" width="8" height="6" fill="#eef" /><rect x="3" y="9" width="8" height="4" fill="#223" /><rect x="8" y="10" width="2" height="3" fill="#eef" /></svg>
          </button>
          <button aria-label="Undo" className="flex items-center gap-1">
            <svg width="15" height="14" viewBox="0 0 15 14"><path d="M2 2v5h5M2.500 6.500C5 2 12 2 12 6.500c0 3-2 5-4 6" fill="none" stroke="#3b6fd0" strokeWidth="2.500" /></svg>
            <Caret />
          </button>
          <button aria-label="Redo" className="flex items-center gap-1">
            <svg width="15" height="14" viewBox="0 0 15 14"><path d="M12 2v5H7M11.500 6.500C9 2 3 2 3 6.500c0 3 1 5 3 5.500" fill="none" stroke="#a9b8cc" strokeWidth="2" /></svg>
            <Caret dim />
          </button>
        </div>
        <button aria-label="Customize toolbar" className="ml-[7px]">
          <svg width="6" height="6" viewBox="0 0 6 6"><path d="M0 .5h6M0 3h6L3 6z" fill="#2a4a7c" stroke="#2a4a7c" strokeWidth=".8" /></svg>
        </button>
        <h1 className="flex-1 pl-[145px] text-[12px] whitespace-pre text-[#6a7a94]">
          8V2U1007A0-预审指示.xls  [兼容模式]  -  <span className="text-[#3e6aaa]">Microsoft Excel</span>
        </h1>
      </div>
      <nav className="flex h-[25px] shrink-0 items-end gap-[9px] border-t border-[#a8c6ec] pl-[48px] text-[#15428b]">
        {tabs.map((t) => (
          <button
            key={t}
            className={`h-6 px-[10px] leading-[22px] ${t === "页面布局" ? "rounded-t border border-b-0 border-[#8fb0dc] bg-[#eaf2fb]" : ""}`}
          >
            {t}
          </button>
        ))}
        <button aria-label="Help" className="mr-[11px] mb-1.5 ml-auto">
          <svg width="14" height="14" viewBox="0 0 14 14"><circle cx="7" cy="7" r="6.500" fill="#dbe8fa" stroke="#2a5cb4" /><circle cx="7" cy="7" r="5" fill="#2f66c8" /><path d="M5 5.500c0-2.500 4-2.500 4 0 0 1.500-2 1.300-2 2.500M7 9v1.500" fill="none" stroke="#fff" strokeWidth="1.300" /></svg>
        </button>
      </nav>
      <button aria-label="Office menu" className="absolute top-2 left-0.5">
        <svg width="38" height="38" viewBox="0 0 38 38">
          <circle cx="19" cy="19" r="18" fill="#dfe6f0" stroke="#8a9ab4" />
          <ellipse cx="19" cy="11" rx="14" ry="9" fill="#fff" opacity=".8" />
          <g fill="none" strokeWidth="3">
            <path d="M18 13.500V9.500h-8v8h5" stroke="#e0582a" />
            <path d="M21 13h6v6h-6z" stroke="#3f88d0" strokeWidth="2.500" />
            <path d="M17 21h-6v7h6v-4" stroke="#f2b430" />
            <path d="M21 22v6h7v-6h-3" stroke="#62a83c" />
          </g>
        </svg>
      </button>
      <Ribbon />
      <div className="flex h-6 shrink-0 items-center border-y border-[#6f94c4] bg-white">
        <label htmlFor="name-box" className="sr-only">Name box</label>
        <input id="name-box" defaultValue="C22" className={`${serif} h-5 w-[140px] bg-white text-center text-[15px] text-black outline-none`} />
        <svg width="8" height="5" viewBox="0 0 8 5" className="mx-[5px]"><path d="M0 0h8L4 4.500z" fill="#000" /></svg>
        <button aria-label="Insert function" className="flex h-[18px] w-[76px] items-center justify-between rounded-l-full border border-[#8fb0dc] bg-gradient-to-b from-[#eaf2fb] to-[#b4cdec] px-1.5">
          <span className="h-2 w-2 rounded-full bg-[#b4c4dc]" />
          <span className={`${serif} text-[14px] leading-4 font-bold text-[#4a5a74] italic`}>fx</span>
        </button>
        <label htmlFor="formula" className="sr-only">Formula</label>
        <input
          id="formula"
          defaultValue="钻孔：孔位公差+/-2mil"
          className="h-5 min-w-0 flex-1 bg-white pl-3 text-[14px] text-black outline-none [font-family:'Liberation_Mono','Noto_Sans_CJK_SC',monospace]"
        />
      </div>
      <div className="min-h-0 flex-1 overflow-hidden border-t border-[#a9c4e9] bg-white">
        <Sheet />
      </div>
    </section>
  );
}

/* ---------- taskbar ---------- */

const excelIcon = (
  <svg width="16" height="16" viewBox="0 0 16 16" className="shrink-0"><rect x="5" y="1" width="10" height="14" fill="#e8f2e8" stroke="#5d8bb8" /><path d="M7 5h7M7 8h7M7 11h7" stroke="#8ab" /><rect x=".5" y="3" width="10" height="10" fill="#fff" stroke="#2f7a3a" /><path d="M3 5l5 6M8 5l-5 6" stroke="#2f8a3a" strokeWidth="2" /></svg>
);
const wordIcon = (
  <svg width="16" height="16" viewBox="0 0 16 16" className="shrink-0"><rect x="5" y="1" width="10" height="14" fill="#eef4fc" stroke="#4a74b8" /><path d="M7 5h7M7 8h7M7 11h7" stroke="#8ab" /><rect x=".5" y="3" width="10" height="10" fill="#fff" stroke="#2f5ab0" /><path d="M2.500 5.500l1.500 5 1.500-4 1.500 4 1.500-5" stroke="#2f5ab0" fill="none" strokeWidth="1.500" /></svg>
);
const camIcon = (
  <svg width="16" height="16" viewBox="0 0 16 16" className="shrink-0"><path d="M1 3l4-2 10 8-4 6z" fill="#205a88" /><circle cx="9" cy="9" r="5.500" fill="#5cd0b0" stroke="#186050" /><circle cx="9" cy="9" r="2" fill="#fff" stroke="#186050" /><path d="M1 4l5 3-3 2z" fill="#30a030" /></svg>
);
const calcIcon = (
  <svg width="14" height="16" viewBox="0 0 14 16" className="shrink-0"><rect x="1" y=".5" width="12" height="15" rx="1" fill="#cfe4f8" stroke="#5a8cc0" /><rect x="3" y="2" width="8" height="3" fill="#4a90d8" /><path d="M3 8h8M3 10.500h8M3 13h8" stroke="#5a8cc0" strokeDasharray="2 1" strokeWidth="1.500" /></svg>
);
const floppyIcon = (
  <svg width="16" height="16" viewBox="0 0 16 16" className="shrink-0"><rect width="16" height="16" fill="#1a2a9c" /><rect x="5" y="0" width="7" height="5" fill="#c8d0e8" /><rect x="2" y="8" width="12" height="8" fill="#fff" /><path d="M3 10.500h10M3 13.500h10" stroke="#d03030" /></svg>
);
const listIcon = (
  <svg width="14" height="16" viewBox="0 0 14 16" className="shrink-0"><rect x="1" width="12" height="16" fill="#e4f6fc" /><path d="M2 3h10M2 6h10M2 9h10M2 12h10" stroke="#38a0c8" strokeWidth="1.500" /></svg>
);
const pdfIcon = (
  <svg width="16" height="16" viewBox="0 0 16 16" className="shrink-0"><rect x="4" y="2" width="11" height="13" fill="#f4f4f4" stroke="#999" /><rect x="1" y="0" width="11" height="12" fill="#b81c1c" /><path d="M3 10c3-2 4-6 3-8-1 3 2 6 5 6-3-1-6 0-8 2z" fill="none" stroke="#fff" strokeWidth="1.300" /></svg>
);
const starIcon = (
  <svg width="16" height="16" viewBox="0 0 16 16" className="shrink-0"><path d="M8 0l2.300 4.500 5.200.8-3.700 3.700.9 5.500L8 12l-4.700 2.500.9-5.500L.5 5.300l5.200-.8z" fill="#f08a18" /><circle cx="8" cy="8" r="3" fill="#ffd060" /></svg>
);
const pIcon = (
  <svg width="16" height="16" viewBox="0 0 16 16" className="shrink-0"><path d="M3 15L6 2h6c4 1 2 7-2 7H7" fill="none" stroke="#1c9048" strokeWidth="3" /></svg>
);
const txtIcon = (
  <svg width="16" height="16" viewBox="0 0 16 16" className="shrink-0"><rect x="2" y="1" width="12" height="14" fill="#eaf4fc" stroke="#5a9cd0" /><path d="M5 8l3-5 2 5z" fill="#3878b8" /><path d="M4 10h8M4 12.500h8" stroke="#8ab" /></svg>
);

const rowOne: [React.ReactNode, string][] = [
  [floppyIcon, "Total Commander 7..."],
  [camIcon, "get.exe"],
  [<XLogo key="x" />, "Engineering Toolkit ..."],
  [<XLogo key="x" />, "Progress"],
  [<XLogo key="x" />, "Graphic Editor 9.07..."],
  [<XLogo key="x" />, "Dialog Box"],
  [starIcon, "兴森快捷衡阳分..."],
  [pIcon, "工程系统   版本..."],
];
const rowTwo: [React.ReactNode, string][] = [
  [excelIcon, "8V2U1007A0制作单.xls ..."],
  [excelIcon, "8V2U1007A0-预审指..."],
  [listIcon, "制作规范 (Ver:1.0.6)"],
  [camIcon, "CAM_Guide v2.74"],
  [pdfIcon, "相关尺寸.pdf - Adobe ..."],
  [wordIcon, "8v2u1007a0-Impedance..."],
  [wordIcon, "201309181129410.rtf [..."],
  [txtIcon, "8v2u1007a0.txt - 写字板"],
];

const taskButton =
  "flex h-[22px] min-w-0 items-center gap-1 border border-t-white border-l-white border-r-[#404040] border-b-[#404040] px-[3px] shadow-[inset_-1px_-1px_0_#808080] whitespace-pre";

function Taskbar() {
  return (
    <footer className={`${ui} relative flex h-[52px] shrink-0 items-center border-t border-[#f4f2ee] bg-[#d4d0c8] px-0.5 pt-px text-[11px] text-black`}>
      <button className={`${taskButton} mt-[3px] w-[47px] shrink-0 gap-px self-start px-0.5 text-[12px]`}>
        <svg width="15" height="15" viewBox="0 0 15 15" className="shrink-0"><path d="M1 3c2-1.500 4-1 5.500 0v4C5 6 3 6 1 7.500z" fill="#e85020" /><path d="M7.500 3.500C9 4.500 11 4.500 14 3v4c-2 1.500-4 1.500-6.500.5z" fill="#6cb830" /><path d="M1 8.500c2-1.500 4-1 5.500 0v4c-2-1-3.500-1-5.500.5z" fill="#3c80e0" /><path d="M7.500 9c2 1 4 1 6.500-.5v4c-2 1.500-5 1.500-6.500.5z" fill="#f8c020" /></svg>
        开始
      </button>
      <button aria-label="Quick launch" className="mt-2 ml-[18px]">
        <svg width="18" height="18" viewBox="0 0 18 18"><circle cx="5" cy="5" r="4" fill="#90c040" /><circle cx="13" cy="5" r="4" fill="#60a0e8" /><circle cx="5" cy="13" r="4" fill="#f0b830" /><circle cx="13" cy="13" r="4" fill="#e05838" /></svg>
      </button>
      <span className="mr-[9px] ml-[20px] h-[42px] w-[3px] border-r-2 border-l border-l-[#808080] border-r-white" />
      <div className="flex min-w-0 flex-1 flex-col gap-px">
        <div className="flex items-center">
          <div className="flex w-[202px] shrink-0 items-center">
            <svg width="18" height="16" viewBox="0 0 18 16" className="mx-1.5 shrink-0"><path d="M2 4l4-4h9l-3 4 3 3H5z" fill="#a0cc40" /><path d="M2 8h9l4 3-4 5H3l3-4z" fill="#58b4e0" /></svg>
            <button className={`${taskButton} ml-1 w-[133px] shrink-0 text-[12px]`}>
              <span className="px-0.5">{calcIcon}</span>计算器
            </button>
            <svg width="16" height="16" viewBox="0 0 16 16" className="ml-[9px] shrink-0"><path d="M3 8.500h10C13 1 3 2 3 8.500c0 5 7 6 9 2" fill="none" stroke="#58b838" strokeWidth="3" /></svg>
          </div>
          <div className="flex min-w-0 flex-1 gap-0.5">
            {rowOne.map(([icon, t]) => (
              <button key={t} className={`${taskButton} flex-1`}>
                {icon}
                <span>{t}</span>
              </button>
            ))}
          </div>
        </div>
        <div className="flex gap-0.5">
          {rowTwo.map(([icon, t], i) => (
            <button
              key={t}
              className={
                i === 1
                  ? "flex h-[22px] min-w-0 flex-1 items-center gap-1 border border-t-[#404040] border-r-white border-b-white border-l-[#404040] bg-white px-[3px] font-bold whitespace-pre"
                  : `${taskButton} flex-1`
              }
            >
              {icon}
              <span>{t}</span>
            </button>
          ))}
        </div>
      </div>
      <span className="mx-2.5 h-[42px] w-[3px] border-r-2 border-l border-l-[#808080] border-r-white" />
      <div className="mr-0.5 flex w-[16px] flex-col items-center gap-1.5">
        <svg width="16" height="14" viewBox="0 0 16 14"><rect x=".5" y="5.500" width="15" height="8" rx="1" fill="#e8e8e8" stroke="#888" /><path d="M3 8h10M3 11h10" stroke="#888" strokeDasharray="1.500 1" /><path d="M8 5c0-3 5-1 5-4" fill="none" stroke="#888" /></svg>
        <svg width="8" height="16" viewBox="0 0 8 16"><path d="M2.500 .5h5v4h-5zM.5 2.500h5v4h-5z" fill="#d4d0c8" stroke="#000" /><path d="M1 12h6l-3 3z" /></svg>
      </div>
      <div className="flex h-[47px] w-[170px] items-start gap-2 border border-t-[#808080] border-r-white border-b-white border-l-[#808080] pt-1 pl-[5px]">
        <svg width="7" height="12" viewBox="0 0 7 12" className="mt-0.5"><path d="M1 4l2.500-3L6 4M1 9l2.500-3L6 9" fill="none" stroke="#000" strokeWidth="1.500" /></svg>
        <div className="grid grid-cols-3 gap-x-2 gap-y-1">
          <svg width="16" height="17" viewBox="0 0 16 17"><path d="M3 1h7v4H5v10H2V1zM8 7h6v4l-3 2-3-2zM9 4v3M13 4v3M11 13v3" fill="#fff" stroke="#444" /></svg>
          <svg width="16" height="17" viewBox="0 0 16 17"><rect x="5" y="4" width="10" height="8" fill="#eee" stroke="#444" /><path d="M2 1h3v4H4v8M7 15h8" fill="none" stroke="#444" /></svg>
          <svg width="16" height="17" viewBox="0 0 16 17"><path d="M1 6l7-5h7l-3 4-4 8-4 1 2-7z" fill="#1c90e0" /><circle cx="11" cy="11" r="5" fill="#e02020" /><path d="M8 11h6" stroke="#fff" strokeWidth="2" /></svg>
          <svg width="16" height="17" viewBox="0 0 16 17"><path d="M1 6h3l4-4v12l-4-4H1z" fill="#fff" stroke="#777" /><path d="M10 5c2 2 2 4 0 6M12 3c4 3 4 7 0 10" fill="none" stroke="#777" /></svg>
          <svg width="16" height="17" viewBox="0 0 16 17"><path d="M8 2v9L0 14z" fill="#e01010" /><path d="M9 3l6 11H9z" fill="#10a030" /><path d="M8 2l2 6" stroke="#e01010" strokeWidth="2" /></svg>
          <svg width="16" height="17" viewBox="0 0 16 17"><path d="M14 2C6 0 1 5 2 10s9 6 11 2l1-4H8M13 8L9 12" fill="none" stroke="#c81818" strokeWidth="3" /></svg>
        </div>
        <div className="flex flex-col items-center pt-px leading-[19px]">
          <span>17:29</span>
          <span>2016/12/15</span>
        </div>
      </div>
      <svg width="14" height="14" viewBox="0 0 14 14" className="absolute top-[22px] right-0"><rect width="14" height="10" fill="#2858a0" /><path d="M1 8l6-7h6v4z" fill="#6aa0e0" /><path d="M0 12h14" stroke="#888" strokeWidth="2" /></svg>
    </footer>
  );
}

export default function App() {
  return (
    <main className="flex h-screen flex-col overflow-hidden bg-black">
      <div className="relative min-h-0 flex-1">
        <div className="absolute inset-0 overflow-hidden">
          <GraphicEditor />
          <PopviewOne />
          <PopviewTwo />
          <Excel />
          <div className="absolute -top-7 left-[1117px] flex h-[46px] w-[46px] items-end justify-center rounded-full border-2 border-[#3d9c50] bg-[#45c862] pb-0.5 shadow-md">
            <span className={`${ui} text-[12px] leading-4 font-bold text-white`}>64</span>
          </div>
        </div>
        <div className="absolute top-[752px] left-[814px] h-[38px] w-[331px] border-[5px] border-[#e60000] shadow-[1px_3px_5px_rgba(0,0,0,0.6),inset_1px_3px_5px_rgba(0,0,0,0.5)]" />
        <div className="absolute top-[709px] left-[297px] z-10 h-[146px] w-[385px] bg-white px-[6px] pt-2 shadow-[1px_3px_6px_rgba(0,0,0,0.6)]">
          <p className={`${serif} text-[25px] leading-6 whitespace-pre text-[#e60000]`}>
            {"关于附图的两个标记预审没用任何\n指示　且客户的要求已经被叉掉了\n  请确认是否需添加　如果需添加\n是否没用位置要求　因为17的位\n置已经加不下了"}
          </p>
        </div>
      </div>
      <Taskbar />
    </main>
  );
}
